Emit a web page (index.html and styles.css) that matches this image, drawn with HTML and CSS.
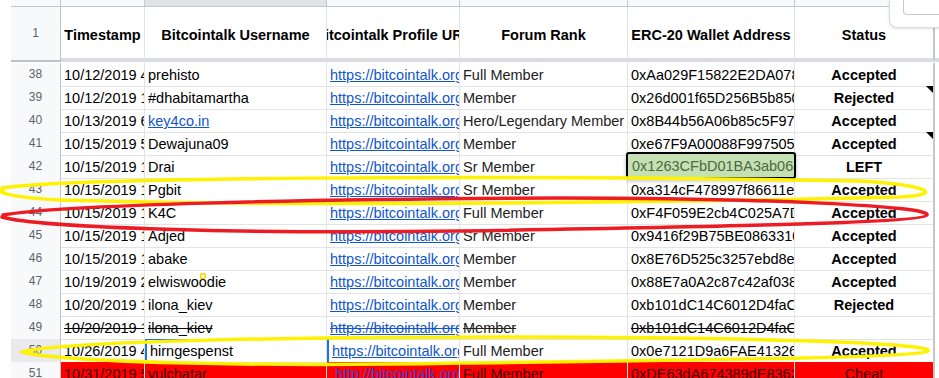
FILE: index.html
```html
<!DOCTYPE html>
<html lang="en">
<head>
  <meta charset="UTF-8">
  <meta name="viewport" content="width=device-width, initial-scale=1.0">
  <title>Bounty participants</title>
  <link rel="stylesheet" href="styles.css">
</head>
<body>
  <div class="sheet">
    <div class="row letters">
      <div></div><div></div><div class="picked"></div><div></div><div></div><div></div><div class="last"></div>
    </div>
    <div class="row head">
      <div class="num">1</div>
      <div class="th"><span>Timestamp</span></div>
      <div class="th"><span>Bitcointalk Username</span></div>
      <div class="th"><span>Bitcointalk Profile URL</span></div>
      <div class="th"><span>Forum Rank</span></div>
      <div class="th"><span>ERC-20 Wallet Address</span></div>
      <div class="th last"><span>Status</span></div>
    </div>
    <div class="freeze"></div>
    <div id="rows"></div>
  </div>

  <div class="find-box"><div class="find-input"><span>Shift</span></div></div>

  <svg class="marks" viewBox="0 0 939 378" fill="none" stroke-linecap="round" stroke-linejoin="round">
    <path d="M2 188 C60 178 480 174 860 181 C925 185 948 194 900 197 C700 202 300 207 60 200 C20 198 -6 193 3 190" stroke="#fff200" stroke-width="3.5"/>
    <path d="M3 215 C60 205 300 199 560 198 C760 198 932 206 927 215 C924 223 700 227 460 231 C250 234 40 228 2 217" stroke="#ed1c24" stroke-width="3.5"/>
    <path d="M22 352 C60 341 300 337 500 337 C750 337 936 343 928 351 C920 358 700 360 460 363 C250 367 60 362 22 352" stroke="#fff200" stroke-width="3.5"/>
    <circle cx="203" cy="276" r="2.5" stroke="#f5d800" stroke-width="1.5"/>
  </svg>

  <script>
    const url = 'https://bitcointalk.org/index.php?action=profile;u=';
    const rows = [
      { n: 38, ts: '10/12/2019 4:02:51', user: 'prehisto', rank: 'Full Member', wallet: '0xAa029F15822E2DA078b3c1', status: 'Accepted' },
      { n: 39, ts: '10/12/2019 1:44:10', user: '#dhabitamartha', rank: 'Member', wallet: '0x26d001f65D256B5b8504a2', status: 'Rejected', note: true },
      { n: 40, ts: '10/13/2019 6:15:37', user: 'key4co.in', userLink: true, rank: 'Hero/Legendary Member', wallet: '0x8B44b56A06b85c5F97e1d0', status: 'Accepted' },
      { n: 41, ts: '10/15/2019 5:20:09', user: 'Dewajuna09', rank: 'Member', wallet: '0xe67F9A00088F9975053a7c', status: 'Accepted', note: true },
      { n: 42, ts: '10/15/2019 1:03:48', user: 'Drai', rank: 'Sr Member', wallet: '0x1263CFbD01BA3ab0684d2e', status: 'LEFT', active: true },
      { n: 43, ts: '10/15/2019 1:11:26', user: 'Pgbit', rank: 'Sr Member', wallet: '0xa314cF478997f86611e0b5', status: 'Accepted' },
      { n: 44, ts: '10/15/2019 1:30:55', user: 'K4C', rank: 'Full Member', wallet: '0xF4F059E2cb4C025A7D19c8', status: 'Accepted' },
      { n: 45, ts: '10/15/2019 1:42:13', user: 'Adjed', rank: 'Sr Member', wallet: '0x9416f29B75BE08633106af', status: 'Accepted' },
      { n: 46, ts: '10/15/2019 1:58:40', user: 'abake', rank: 'Member', wallet: '0x8E76D525c3257ebd8e41b9', status: 'Accepted' },
      { n: 47, ts: '10/19/2019 2:07:31', user: 'elwiswoodie', rank: 'Member', wallet: '0x88E7a0A2c87c42af038d5e', status: 'Accepted' },
      { n: 48, ts: '10/20/2019 1:16:02', user: 'ilona_kiev', rank: 'Member', wallet: '0xb101dC14C6012D4faC7e30', status: 'Rejected' },
      { n: 49, ts: '10/20/2019 1:19:47', user: 'ilona_kiev', rank: 'Member', wallet: '0xb101dC14C6012D4faC7e30', status: '', strike: true },
      { n: 50, ts: '10/26/2019 4:33:18', user: 'hirngespenst', rank: 'Full Member', wallet: '0x0e7121D9a6FAE413269c04', status: 'Accepted', current: true },
      { n: 51, ts: '10/31/2019 5:48:22', user: 'vulchatar', rank: 'Full Member', wallet: '0xDE63dA674389dE83621fa7', status: 'Cheat', cheat: true }
    ];

    const list = document.getElementById('rows');
    rows.forEach((r, i) => {
      const row = document.createElement('div');
      row.className = 'row' + (r.strike ? ' strike' : '') + (r.cheat ? ' cheat' : '') + (r.current ? ' current' : '');
      const link = r.cheat ? 'http://bitcointalk.org/index.php?action=profile;u=2711' : url + (2600000 + i * 317);
      const user = r.userLink ? `<a href="#">${r.user}</a>` : r.user;
      const wallet = r.active ? `<span class="active-box">${r.wallet}</span>` : r.wallet;
      row.innerHTML =
        `<div class="num">${r.n}</div>` +
        `<div class="c">${r.ts}</div>` +
        `<div class="c user">${user}</div>` +
        `<div class="c url"><a href="#">${link}</a></div>` +
        `<div class="c rank">${r.rank}</div>` +
        `<div class="c wallet${r.active ? ' active' : ''}">${wallet}</div>` +
        `<div class="c status last${r.note ? ' note' : ''}">${r.status}</div>`;
      list.appendChild(row);
    });
  </script>
</body>
</html>
```

FILE: styles.css
```css
* { box-sizing: border-box; }
body {
  margin: 0;
  width: 939px;
  height: 378px;
  overflow: hidden;
  position: relative;
  background: #fff;
  font-family: 'Liberation Sans', Arial, sans-serif;
  font-size: 14.5px;
  color: #000;
}
.sheet {
  padding-left: 11px;
}
.row {
  display: grid;
  grid-template-columns: 50px 84px 182px 133px 168px 167px 140px;
  height: 23px;
}
.letters {
  height: 7px;
}
.letters div {
  background: #f8f9fa;
  border-right: 1px solid #c7c7c7;
  border-bottom: 1px solid #c7c7c7;
}
.letters .picked {
  background: #e1e3e6;
}
.head {
  height: 51px;
}
.th {
  display: flex;
  align-items: center;
  justify-content: center;
  padding-top: 2px;
  overflow: hidden;
  white-space: nowrap;
  font-weight: bold;
  border-right: 1px solid #e2e3e3;
}
.num {
  background: #f8f9fa;
  border-right: 1px solid #c4c4c4;
  border-bottom: 1px solid #e2e3e3;
  color: #5f6368;
  font-size: 12px;
  text-align: center;
  line-height: 23px;
}
.head .num {
  line-height: 53px;
  border-bottom: none;
}
.freeze {
  height: 4px;
  margin-bottom: 1px;
  background: linear-gradient(to right, #bdc1c6 50px, #dadce0 50px);
}
.c {
  padding: 1px 3px 0;
  line-height: 22px;
  overflow: hidden;
  white-space: nowrap;
  border-right: 1px solid #e2e3e3;
  border-bottom: 1px solid #e2e3e3;
}
.last {
  border-right: 2px solid #c4c7c5 !important;
}
.c a {
  color: #1155cc;
  text-decoration: underline;
}
.rank {
  color: #222;
}
.status {
  text-align: center;
  font-weight: bold;
  position: relative;
}
.note::after {
  content: '';
  position: absolute;
  top: 0;
  right: 0;
  border-top: 7px solid #000;
  border-left: 7px solid transparent;
}
.strike .c {
  text-decoration: line-through;
}
.strike .c a {
  text-decoration: underline line-through;
}
.current .num {
  background: #e8eaed;
}
.current .user {
  border-left: 2px solid #1a73e8;
  position: relative;
}
.current .user::before {
  content: '';
  position: absolute;
  top: -1px;
  left: 0;
  width: 58px;
  height: 2px;
  background: #1a73e8;
}
.current .url {
  border-left: 2px solid #1a73e8;
}
.wallet.active {
  position: relative;
  overflow: visible;
}
.active-box {
  position: absolute;
  top: -3px;
  left: -2px;
  right: -2px;
  bottom: -1px;
  padding: 1px 4px 0;
  line-height: 22px;
  overflow: hidden;
  background: #c5e0b3;
  color: #4b6a3f;
  border: 2px solid #000;
  border-radius: 3px;
  box-shadow: 0 2px 4px rgba(0, 0, 0, 0.25);
  z-index: 2;
}
.cheat .c {
  background: #ff0000;
  color: #3a0000;
}
.cheat .url {
  padding-left: 8px;
}
.cheat .c a {
  color: #3d3dd8;
}
.cheat .status {
  font-weight: normal;
}
.find-box {
  position: absolute;
  top: 0;
  left: 889px;
  width: 60px;
  height: 28px;
  background: #fff;
  border: 1px solid #dadce0;
  border-top: none;
  border-bottom-left-radius: 8px;
  box-shadow: 0 1px 3px rgba(0, 0, 0, 0.12);
  z-index: 3;
}
.find-input {
  position: absolute;
  top: -1px;
  left: 13px;
  width: 50px;
  height: 16px;
  border: 1px solid #c7c7c7;
  border-top: none;
  border-bottom-left-radius: 4px;
  padding-left: 6px;
  font-size: 12px;
  color: #3c4043;
  overflow: hidden;
}
.find-input span {
  display: block;
  line-height: 12px;
  margin-top: -10px;
}
.marks {
  position: absolute;
  top: 0;
  left: 0;
  width: 939px;
  height: 378px;
  pointer-events: none;
  z-index: 5;
}
```
